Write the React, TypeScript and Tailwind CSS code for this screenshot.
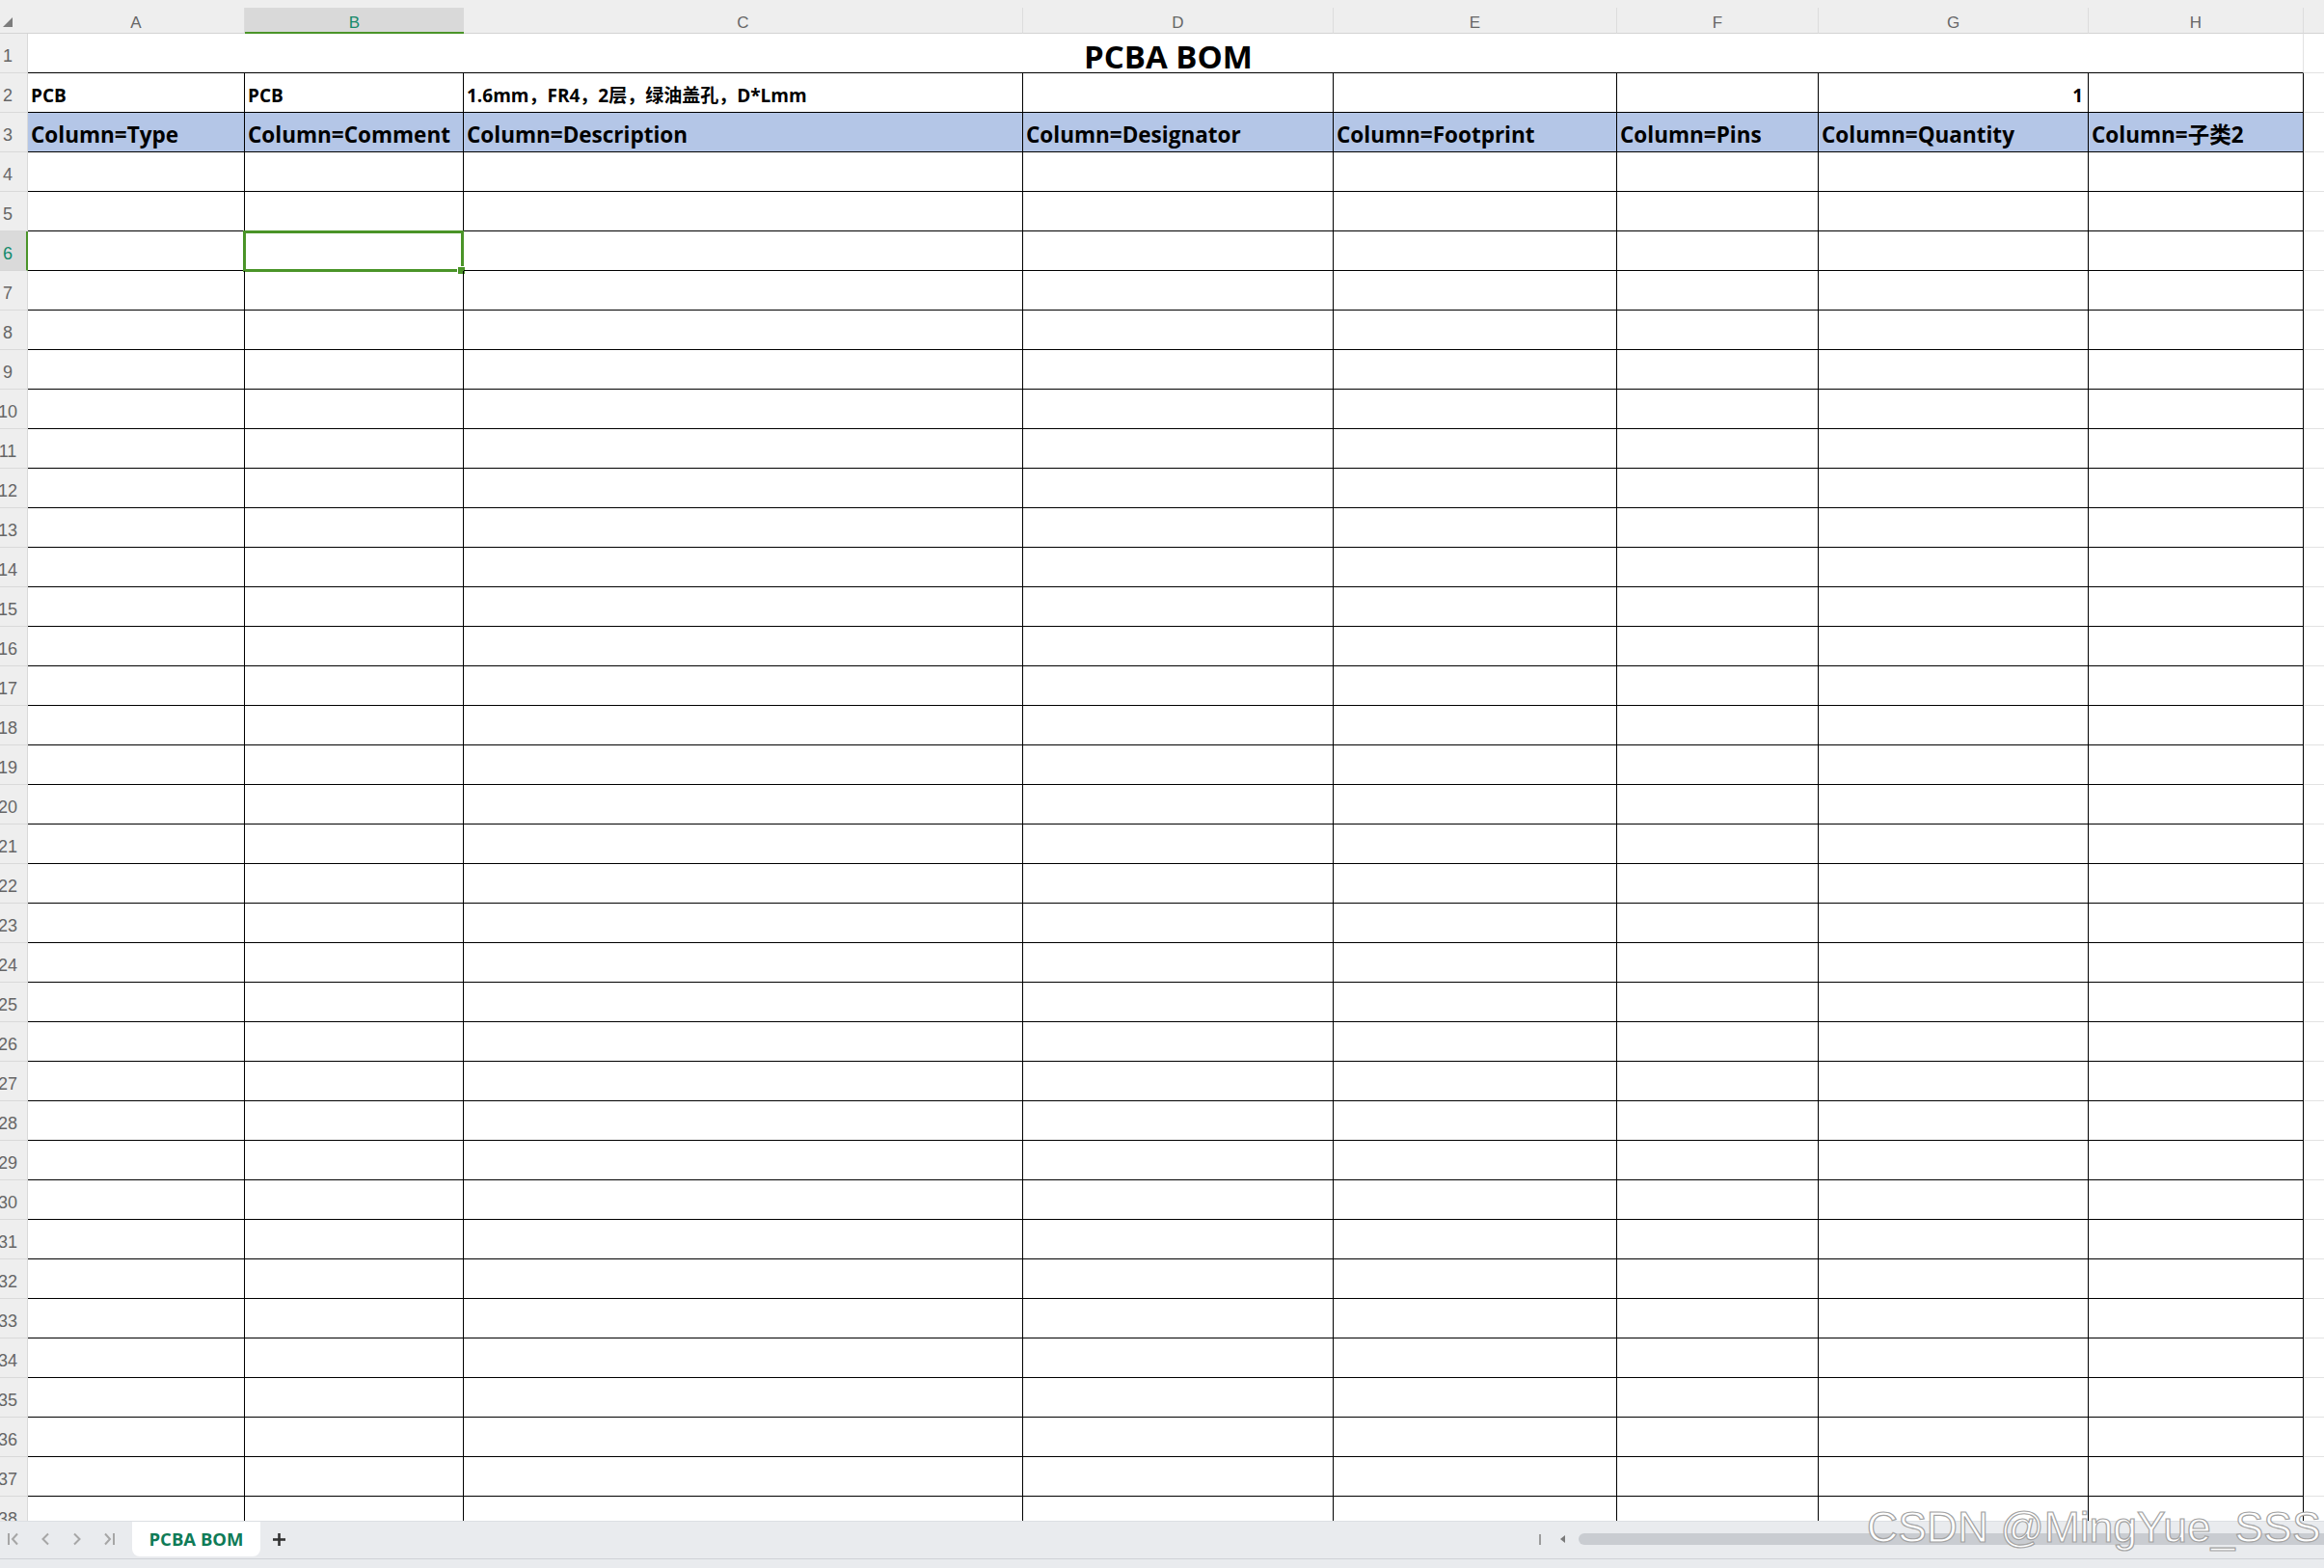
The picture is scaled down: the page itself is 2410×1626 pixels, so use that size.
import React from "react";

type Col = { key: string; w: string };

const COLS: Col[] = [
  { key: "A", w: "w-[225px]" },
  { key: "B", w: "w-[227px]" },
  { key: "C", w: "w-[580px]" },
  { key: "D", w: "w-[322px]" },
  { key: "E", w: "w-[294px]" },
  { key: "F", w: "w-[209px]" },
  { key: "G", w: "w-[280px]" },
  { key: "H", w: "w-[223px]" },
];

const CELL_FONT = "font-['Open_Sans','Noto_Sans_CJK_SC',sans-serif]";

const ROW2: Record<string, string> = {
  A: "PCB",
  B: "PCB",
  C: "1.6mm，FR4，2层，绿油盖孔，D*Lmm",
};

const HEADERS = [
  "Column=Type",
  "Column=Comment",
  "Column=Description",
  "Column=Designator",
  "Column=Footprint",
  "Column=Pins",
  "Column=Quantity",
  "Column=子类2",
];

function RowHead({ n, active }: { n: number; active?: boolean }) {
  return (
    <div
      className={
        active
          ? "w-[29px] shrink-0 overflow-hidden bg-[#dadada] border-r-2 border-r-[#4a9428] border-b border-b-[#d6d6d6] flex items-center"
          : "w-[29px] shrink-0 overflow-hidden bg-[#eeeeee] border-r border-b border-[#d9d9d9] flex items-center"
      }
    >
      <div className="w-[16px] flex justify-center pt-[6px]">
        <span
          className={
            active
              ? "text-[18px] leading-none text-[#128a6c] font-['Liberation_Sans',sans-serif]"
              : "text-[18px] leading-none text-[#666666] font-['Liberation_Sans',sans-serif]"
          }
        >
          {n}
        </span>
      </div>
    </div>
  );
}

function ColumnHeader() {
  return (
    <div className="flex h-[35px] bg-[#eeeeee] pt-[8px] shrink-0">
      <div className="w-[29px] shrink-0 border-b border-[#d4d4d4] relative">
        <svg
          className="absolute left-[3px] top-[10px]"
          width="10"
          height="10"
          viewBox="0 0 10 10"
        >
          <polygon points="10,0 10,10 0,10" fill="#7d7d7d" />
        </svg>
      </div>
      {COLS.map((c) =>
        c.key === "B" ? (
          <div
            key={c.key}
            className={`${c.w} shrink-0 bg-[#d9d9d9] border-b-2 border-[#4a9428] flex items-center justify-center`}
          >
            <span className="text-[17px] leading-none text-[#168a6a] font-['Liberation_Sans',sans-serif] pt-[5px]">
              {c.key}
            </span>
          </div>
        ) : (
          <div
            key={c.key}
            className={`${c.w} shrink-0 border-r border-r-[#dcdcdc] border-b border-b-[#d4d4d4] flex items-center justify-center`}
          >
            <span className="text-[17px] leading-none text-[#666666] font-['Liberation_Sans',sans-serif] pt-[5px]">
              {c.key}
            </span>
          </div>
        )
      )}
      <div className="flex-1 border-b border-[#d4d4d4]" />
    </div>
  );
}

function TitleRow() {
  return (
    <div className="flex h-[41px] shrink-0">
      <RowHead n={1} />
      <div
        className={`w-[2360px] shrink-0 border-b border-b-black border-r border-r-[#e2e2e2] flex items-end justify-center pb-0 ${CELL_FONT}`}
      >
        <span className="text-[33px] font-bold leading-none text-black pl-[6px]">
          PCBA BOM
        </span>
      </div>
      <div className="flex-1 border-b border-[#e2e2e2]" />
    </div>
  );
}

function InfoRow() {
  return (
    <div className="flex h-[41px] shrink-0">
      <RowHead n={2} />
      {COLS.map((c) => (
        <div
          key={c.key}
          className={`${c.w} shrink-0 border-r border-b border-black flex items-end overflow-hidden ${
            c.key === "G" ? "justify-end pr-[5px]" : "pl-[3px]"
          } pb-[7px] ${CELL_FONT}`}
        >
          <span className="text-[19px] font-bold leading-none text-black whitespace-nowrap">
            {c.key === "G" ? "1" : ROW2[c.key] ?? ""}
          </span>
        </div>
      ))}
      <div className="flex-1 border-b border-[#e2e2e2]" />
    </div>
  );
}

function HeaderRow() {
  return (
    <div className="flex h-[41px] shrink-0">
      <RowHead n={3} />
      {COLS.map((c, i) => (
        <div
          key={c.key}
          className={`${c.w} shrink-0 bg-[#b4c6e7] border-r border-b border-black flex items-end pl-[3px] pb-[6px] overflow-hidden ${CELL_FONT}`}
        >
          <span className="text-[22.5px] font-bold leading-none text-black whitespace-nowrap">
            {HEADERS[i]}
          </span>
        </div>
      ))}
      <div className="flex-1 border-b border-[#e2e2e2]" />
    </div>
  );
}

function EmptyRow({ n }: { n: number }) {
  const active = n === 6;
  return (
    <div className="flex h-[41px] shrink-0">
      <RowHead n={n} active={active} />
      {COLS.map((c) => (
        <div
          key={c.key}
          className={`${c.w} shrink-0 border-r border-b border-black relative`}
        >
          {active && c.key === "B" && (
            <div className="absolute left-[-2px] top-[-1px] right-[-1px] bottom-[-2px] border-[3px] border-[#4a9428]">
              <div className="absolute right-[-5px] bottom-[-6px] w-[9px] h-[9px] bg-[#4a9428] border border-white" />
            </div>
          )}
        </div>
      ))}
      <div className="flex-1 border-b border-[#e2e2e2]" />
    </div>
  );
}

function Chevron({ dir, bar }: { dir: "left" | "right"; bar?: boolean }) {
  return (
    <svg width="14" height="14" viewBox="0 0 14 14" fill="none">
      {dir === "left" ? (
        <>
          {bar && <line x1="2" y1="1" x2="2" y2="13" stroke="#a6a6a6" strokeWidth="2" />}
          <polyline
            points={bar ? "11,1.5 6,7 11,12.5" : "10,1.5 4.5,7 10,12.5"}
            stroke="#a6a6a6"
            strokeWidth="2"
            fill="none"
          />
        </>
      ) : (
        <>
          {bar && <line x1="12" y1="1" x2="12" y2="13" stroke="#a6a6a6" strokeWidth="2" />}
          <polyline
            points={bar ? "3,1.5 8,7 3,12.5" : "4,1.5 9.5,7 4,12.5"}
            stroke="#a6a6a6"
            strokeWidth="2"
            fill="none"
          />
        </>
      )}
    </svg>
  );
}

function SheetTabs() {
  return (
    <div className="h-[39px] shrink-0 bg-[#e9ebee] border-t border-[#dcdfe3] flex items-start">
      <div className="w-[137px] h-[36px] flex items-center pl-[7px] gap-[19px]">
        <Chevron dir="left" bar />
        <Chevron dir="left" />
        <Chevron dir="right" />
        <Chevron dir="right" bar />
      </div>
      <div
        className={`w-[133px] h-[36px] bg-white rounded-b-[8px] flex items-center justify-center ${CELL_FONT}`}
      >
        <span className="text-[18.5px] font-bold text-[#0f7b57] leading-none">
          PCBA BOM
        </span>
      </div>
      <div className="h-[36px] flex items-center pl-[12px]">
        <svg width="15" height="15" viewBox="0 0 15 15">
          <line x1="7.5" y1="1" x2="7.5" y2="14" stroke="#333333" strokeWidth="2.6" />
          <line x1="1" y1="7.5" x2="14" y2="7.5" stroke="#333333" strokeWidth="2.6" />
        </svg>
      </div>
      <div className="flex-1" />
      <div className="w-[814px] h-[36px] flex items-center">
        <div className="w-[2px] h-[11px] bg-[#9c9c9c]" />
        <svg className="ml-[20px]" width="6" height="8" viewBox="0 0 6 8">
          <polygon points="5,0 5,8 0,4" fill="#7a7a7a" />
        </svg>
        <div className="ml-[13px] flex-1 h-[12px] rounded-l-full bg-[#c9ccd1]" />
      </div>
    </div>
  );
}

export default function App() {
  const rest: number[] = [];
  for (let i = 4; i <= 38; i++) rest.push(i);

  return (
    <div className="relative w-[2410px] h-[1626px] overflow-hidden bg-white flex flex-col">
      <ColumnHeader />
      <div className="h-[1542px] shrink-0 overflow-hidden flex flex-col">
        <TitleRow />
        <InfoRow />
        <HeaderRow />
        {rest.map((n) => (
          <EmptyRow key={n} n={n} />
        ))}
      </div>
      <SheetTabs />
      <div className="flex-1 bg-[#e9ebee] border-t border-[#cfd2d7]" />
      <div className="absolute left-[1936px] top-[1562px] text-[44.5px] leading-none text-white font-['Liberation_Sans',sans-serif] [-webkit-text-stroke:1.2px_#a3a3a3] whitespace-nowrap pointer-events-none">
        CSDN @MingYue_SSS
      </div>
    </div>
  );
}
